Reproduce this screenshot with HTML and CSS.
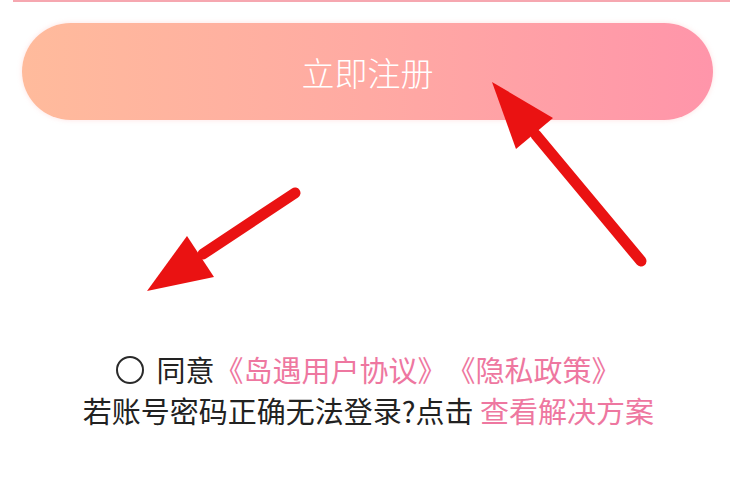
FILE: index.html
```html
<!DOCTYPE html>
<html lang="zh-CN">
<head>
<meta charset="utf-8">
<title>注册</title>
<link rel="stylesheet" href="styles.css">
</head>
<body>
<div class="page">
  <div class="field-edge"></div>
  <button class="register-btn" type="button">立即注册</button>
  <div class="notes">
    <div class="agree-row">
      <span class="radio"></span>
      <span class="agree-text">同意<a class="link">《岛遇用户协议》</a><a class="link">《隐私政策》</a></span>
    </div>
    <div class="help-row">若账号密码正确无法登录?点击 <a class="link">查看解决方案</a></div>
  </div>
  <svg class="annotations" width="737" height="478" viewBox="0 0 737 478" aria-hidden="true">
    <g stroke="#ea1212" stroke-width="11" stroke-linecap="round" fill="none">
      <line x1="295" y1="193" x2="203" y2="254"/>
      <line x1="641" y1="261" x2="536" y2="135"/>
    </g>
    <g fill="#ea1212">
      <polygon points="147,291 214,277 187,236"/>
      <polygon points="492,82 553,118 516,149"/>
    </g>
  </svg>
</div>
</body>
</html>
```

FILE: styles.css
```css
html, body {
  margin: 0;
  padding: 0;
  background: #ffffff;
}

.page {
  position: relative;
  width: 737px;
  height: 478px;
  overflow: hidden;
  display: flex;
  flex-direction: column;
  font-family: "Noto Sans CJK SC", "Noto Sans", sans-serif;
}

.field-edge {
  height: 2px;
  margin: 0 7px 0 13px;
  background: #f6a7b0;
}

.register-btn {
  margin: 21px 0 0 22px;
  width: 691px;
  height: 97px;
  border: none;
  border-radius: 49px;
  background: linear-gradient(90deg, #ffbb9c 0%, #ffaaa3 50%, #ff95aa 100%);
  box-shadow: 0 0 5px rgba(255, 170, 170, 0.35);
  color: #ffffff;
  font-family: "Noto Sans CJK SC", sans-serif;
  font-size: 33px;
  font-weight: 300;
  padding: 0;
  display: flex;
  align-items: center;
  justify-content: center;
}

.notes {
  margin-top: 229px;
  display: flex;
  flex-direction: column;
  align-items: center;
  font-size: 29px;
  line-height: 41px;
  color: #222222;
  text-spacing-trim: space-all;
}

.agree-row {
  display: flex;
  align-items: center;
}

.radio {
  box-sizing: border-box;
  width: 28px;
  height: 28px;
  border: 2.6px solid #2a2a2a;
  border-radius: 50%;
  margin-right: 12px;
}

.agree-text,
.help-row {
  white-space: nowrap;
}

.link {
  color: #ee77a0;
  text-decoration: none;
}

.annotations {
  position: absolute;
  top: 0;
  left: 0;
  pointer-events: none;
}
```
